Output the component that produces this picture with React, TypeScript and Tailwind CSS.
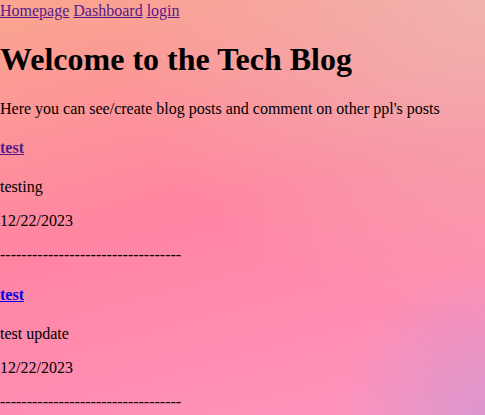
import React from "react";

const posts = [
  { title: "test", body: "testing", date: "12/22/2023", visited: true },
  { title: "test", body: "test update", date: "12/22/2023", visited: false },
];

export default function App() {
  return (
    <div className="min-h-screen pt-[2px] font-['Liberation_Serif','Times_New_Roman',serif] text-[16px] leading-[normal] text-black bg-[radial-gradient(circle_at_100%_100%,rgba(218,150,206,0.95)_0%,rgba(218,150,206,0)_150px),radial-gradient(ellipse_at_100%_0%,rgba(238,184,176,0.85)_0%,rgba(238,184,176,0)_55%),linear-gradient(165deg,#faa68e_0%,#ff84a2_48%,#ff96c0_100%)]">
      <nav>
        <a href="#" className="text-[#551a8b] underline">Homepage</a>{" "}
        <a href="#" className="text-[#551a8b] underline">Dashboard</a>{" "}
        <a href="#" className="text-[#551a8b] underline">login</a>
      </nav>
      <h1 className="text-[32px] font-bold my-[21.44px]">Welcome to the Tech Blog</h1>
      <p className="my-4">Here you can see/create blog posts and comment on other ppl's posts</p>
      {posts.map((p, i) => (
        <div key={i}>
          <h4 className="text-[16px] font-bold my-[21.28px]">
            <a href="#" className={p.visited ? "text-[#551a8b] underline" : "text-[#0000ee] underline"}>{p.title}</a>
          </h4>
          <p className="my-4">{p.body}</p>
          <p className="my-4">{p.date}</p>
          <p className="my-4">----------------------------------</p>
        </div>
      ))}
    </div>
  );
}
